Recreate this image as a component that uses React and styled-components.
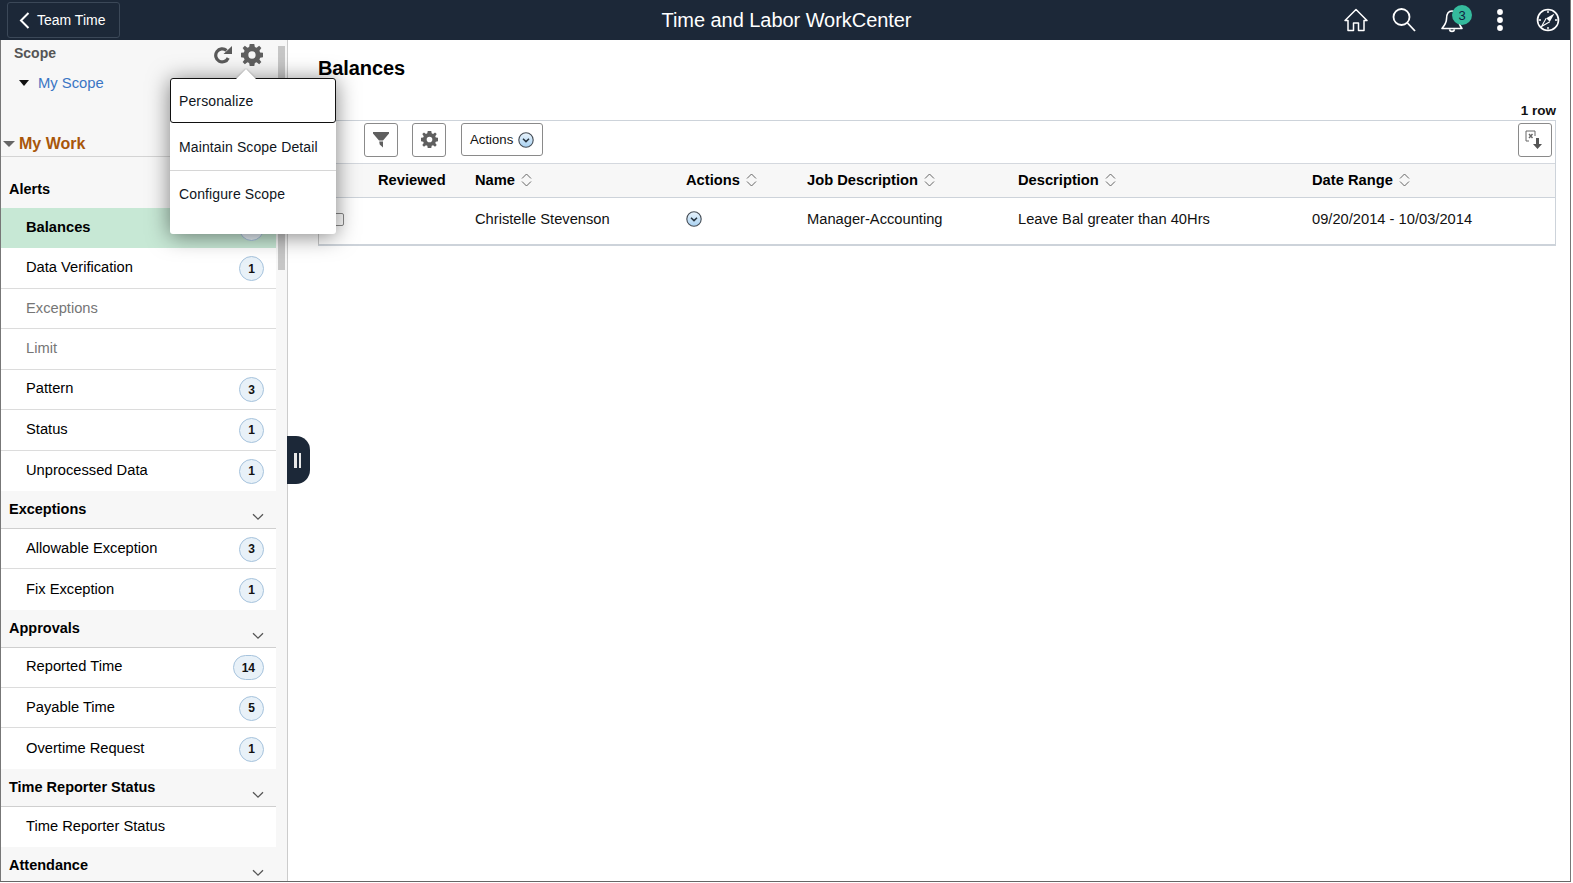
import React from "react";
import styled, { createGlobalStyle } from "styled-components";

const Global = createGlobalStyle`
  html, body { margin: 0; padding: 0; background: #fff; overflow: hidden; }
  body { font-family: "Liberation Sans", Arial, sans-serif; font-size: 14px; color: #000; }
`;

const Frame = styled.div`
  width: 1571px; height: 882px; box-sizing: border-box; position: relative; overflow: hidden;
  display: flex; flex-direction: column; background: #fff;
  border-bottom: 1px solid #666; border-right: 1px solid #777;
`;
const Banner = styled.header`
  height: 40px; flex: none; background: #1c2838; display: grid; grid-template-columns: 1fr auto 1fr; align-items: center;
  color: #fff; padding-left: 7px;
`;
const BackButton = styled.button`
  height: 36px; width: 113px; box-sizing: border-box; background: transparent; color: #fff;
  border: 1px solid #3b4858; border-radius: 3px; display: flex; align-items: center; gap: 7px;
  padding: 0 0 0 11px; font: 14px "Liberation Sans", Arial, sans-serif;
`;
const BannerTitle = styled.div`
  text-align: center; font-size: 20px; letter-spacing: -0.05px; padding-right: 4px;
`;
const IconSet = styled.div`
  display: flex; align-items: center; justify-content: flex-end; margin-right: -2px;
`;
const IconSlot = styled.span`
  width: 48px; height: 40px; display: flex; align-items: center; justify-content: center; position: relative;
`;
const Notice = styled.span`
  position: absolute; left: 24px; top: 5px; width: 20px; height: 20px; border-radius: 50%;
  background: #35bb9d; color: #10233f; font-size: 13px; display: flex; align-items: center; justify-content: center;
`;
const Body = styled.div`
  flex: 1; display: flex; min-height: 0;
`;
const Sidebar = styled.aside`
  width: 288px; flex: none; box-sizing: border-box; display: flex; background: #f7f7f7;
  border-left: 1px solid #777; border-right: 1px solid #ccc; overflow: hidden;
`;
const Nav = styled.nav`
  width: 275px; flex: none; display: flex; flex-direction: column;
`;
const Gutter = styled.div`
  flex: 1; padding: 6px 2px 0 2px;
`;
const Thumb = styled.div`
  width: 7px; height: 224px; background: #c6c6c6;
`;
const ScopeHead = styled.div`
  height: 26px; flex: none; display: flex; align-items: center; justify-content: space-between; padding: 0 13px 0 13px;
  font-weight: bold; color: #555;
`;
const ScopeTools = styled.span`
  display: flex; align-items: center; gap: 9px; color: #5a5a5a; margin-top: 3px;
`;
const ScopeLink = styled.div`
  height: 34px; flex: none; display: flex; align-items: center; gap: 9px; padding-left: 18px; color: #3a75c4; font-size: 14.8px;
`;
const TriDown = styled.span`
  width: 0; height: 0; border-left: ${p => p.$w}px solid transparent; border-right: ${p => p.$w}px solid transparent;
  border-top: 6px solid ${p => p.$c};
`;
const WorkHead = styled.div`
  margin-top: 27px; height: 30px; flex: none; box-sizing: border-box; display: flex; align-items: center; gap: 4px; padding: 9px 0 4px 2px;
  font-size: 16px; font-weight: bold; color: #a8560a; border-bottom: 1px solid #d4d4d4;
`;
const GroupHead = styled.div`
  height: ${p => p.$h || 37.8}px; box-sizing: border-box; position: relative; flex: none;
  padding: ${p => p.$t || 9}px 0 0 ${p => p.$l || 8}px; font-size: 14.5px; font-weight: bold; color: #000;
  border-bottom: ${p => (p.$plain ? "0" : "1px solid #cfcfcf")}; line-height: 18px;
`;
const Chevron = styled.svg`
  position: absolute; right: 12px; top: 22px;
`;
const Row = styled.div`
  height: 40.45px; flex: none; box-sizing: border-box; display: flex; align-items: center; justify-content: space-between;
  padding: 0 12px 0 25px; background: ${p => (p.$active ? "#c7e8d5" : "#fff")};
  border-bottom: ${p => (p.$last ? "0" : "1px solid #dcdcdc")};
  color: ${p => (p.$muted ? "#767676" : "#000")}; font-weight: ${p => (p.$active ? "bold" : "normal")};
  font-size: 14.7px;
`;
const RowLabel = styled.span`
  margin-top: -2px;
`;
const Badge = styled.span`
  min-width: 25px; height: 25px; box-sizing: border-box; padding: 0 8px; border-radius: 13px; border: 1px solid #a6c3dd;
  background: #e8f1f8; font-size: 12px; font-weight: bold; display: flex; align-items: center; justify-content: center;
  color: #111; margin-top: 1px;
`;
const Main = styled.main`
  flex: 1; min-width: 0; padding: 16px 14px 0 30px; display: flex; flex-direction: column;
`;
const Title = styled.h1`
  margin: 0; font-size: 20px; line-height: 24px; font-weight: bold; color: #000; letter-spacing: -0.1px;
`;
const RowCount = styled.div`
  margin-top: 22px; height: 18px; text-align: right; font-weight: bold; font-size: 13.5px; line-height: 18px; color: #111;
`;
const GridBox = styled.section`
  border: 1px solid #cdd3da; border-bottom-width: 2px; border-top-width: 1px; border-left-color: #c9c9c9;
`;
const Toolbar = styled.div`
  height: 43px; box-sizing: border-box; display: flex; align-items: center; gap: 14px; padding: 0 3px 5px 45px;
  border-bottom: 1px solid #d4d8de;
`;
const ToolButton = styled.button`
  width: 34px; height: 34px; box-sizing: border-box; background: #fff; border: 1px solid #8a8a8a; border-radius: 3px;
  display: flex; align-items: center; justify-content: center; padding: 0; color: #666;
`;
const ActionsButton = styled.button`
  height: 33px; width: 82px; box-sizing: border-box; background: #fff; border: 1px solid #8a8a8a; border-radius: 3px; margin-left: 1px;
  display: flex; align-items: center; gap: 5px; padding: 0 0 0 8px; font: 13.2px "Liberation Sans", Arial, sans-serif; color: #111;
`;
const Spacer = styled.span`flex: 1;`;
const Cols = styled.div`
  display: grid; grid-template-columns: 59px 97px 211px 121px 211px 294px 1fr; align-items: center;
`;
const HeadRow = styled(Cols)`
  height: 34px; box-sizing: border-box; background: #f7f7f7; border-bottom: 1px solid #cdd3da; padding-bottom: 1px;
`;
const HeadCell = styled.span`
  font-weight: bold; font-size: 14.7px; display: flex; align-items: center; gap: 6px;
  grid-column: ${p => p.$col};
`;
const BodyRow = styled(Cols)`
  height: 46px; font-size: 14.7px; color: #111; padding-bottom: 4px; box-sizing: border-box;
`;
const Check = styled.span`
  display: block; width: 13px; height: 13px; box-sizing: border-box; border: 1px solid #888; border-radius: 2px; margin-left: 12px;
`;
const Handle = styled.div`
  position: absolute; left: 287px; top: 436px; width: 23px; height: 48px; background: #1c2838;
  border-radius: 0 14px 14px 0; display: flex; align-items: center; justify-content: center; gap: 2px; padding-right: 2px; box-sizing: border-box;
`;
const HandleBar = styled.span`
  width: 2.5px; height: 15px; background: #e8e8e8;
`;
const Menu = styled.div`
  position: absolute; left: 170px; top: 78px; width: 166px; height: 156px; background: #fff; border-radius: 3px;
  box-shadow: 0 2px 22px rgba(0,0,0,.5); display: flex; flex-direction: column;
`;
const MenuArrow = styled.span`
  position: absolute; left: 66px; top: -10px; width: 20px; height: 11px; overflow: hidden;
  &::before { content: ""; display: block; width: 14px; height: 14px; background: #fff; transform: translate(3px, 4px) rotate(45deg); box-shadow: 0 0 2px #888; }
`;
const MenuItem = styled.div`
  height: ${p => p.$h}px; flex: none; box-sizing: border-box; padding: ${p => p.$t}px 0 0 9px; font-size: 14px; line-height: 18px; color: #10151c;
  letter-spacing: .12px;
  border: ${p => (p.$focus ? "1px solid #111" : "0")}; border-radius: ${p => (p.$focus ? "3px" : "0")};
  ${p => (p.$focus ? "padding-left: 8px;" : "")}
  border-bottom: ${p => (p.$focus ? "1px solid #111" : p.$line ? "1px solid #d6d6d6" : "0")};
`;

const Diamond = () => (
  <svg width="11" height="14" viewBox="0 0 11 14" fill="none" stroke="#666" strokeWidth="1">
    <path d="M1 5.500 5.500 1 10 5.500M1 8.500 5.500 13 10 8.500" />
  </svg>
);
const Cog = ({ size, color = "#5f5f5f" }) => (
  <svg width={size} height={size} viewBox="0 0 24 24">
    <path fill={color} fillRule="evenodd" d="M9.500 0h5l.6 3.300 1.900.8L19.800 2l2.400 2.400-2.100 2.900.8 1.900 3.100.3v5l-3.100.6-.8 1.900 2.100 2.700-2.400 2.400-2.800-2.100-1.900.8-.6 3.100h-5l-.6-3.100-1.900-.8-2.800 2.100-2.400-2.400 2.100-2.700-.8-1.900L0 14.500v-5l3.100-.3.800-1.900L1.800 4.400 4.200 2 7 4.100l1.900-.8L9.500 0Zm2.500 8a4 4 0 1 0 0 8 4 4 0 0 0 0-8Z" />
  </svg>
);
const RoundDown = ({ size = 16 }) => (
  <svg width={size} height={size} viewBox="0 0 16 16">
    <defs>
      <linearGradient id="rd" x1="0" y1="0" x2="0" y2="1">
        <stop offset="0" stopColor="#e9f3fb" />
        <stop offset="1" stopColor="#a9d2f2" />
      </linearGradient>
    </defs>
    <circle cx="8" cy="8" r="7.200" fill="url(#rd)" stroke="#444c55" strokeWidth="1.100" />
    <path d="M5 6.800 8 9.600 11 6.800" fill="none" stroke="#27333f" strokeWidth="1.500" />
  </svg>
);
const GroupChevron = () => (
  <Chevron width="12" height="8" viewBox="0 0 12 8" fill="none" stroke="#555" strokeWidth="1.300">
    <path d="M1 1.200 6 6.200 11 1.200" />
  </Chevron>
);

const alerts = [
  { t: "Data Verification", n: 1 },
  { t: "Exceptions", muted: true },
  { t: "Limit", muted: true },
  { t: "Pattern", n: 3 },
  { t: "Status", n: 1 },
  { t: "Unprocessed Data", n: 1, last: true },
];
const groups = [
  { name: "Exceptions", items: [{ t: "Allowable Exception", n: 3 }, { t: "Fix Exception", n: 1, last: true }] },
  { name: "Approvals", items: [{ t: "Reported Time", n: 14 }, { t: "Payable Time", n: 5 }, { t: "Overtime Request", n: 1, last: true }] },
  { name: "Time Reporter Status", items: [{ t: "Time Reporter Status", last: true }] },
];
const NavRow = ({ t, n, muted, last, active }) => (
  <Row $muted={muted} $last={last} $active={active}>
    <RowLabel>{t}</RowLabel>
    {n != null && <Badge>{n}</Badge>}
  </Row>
);

export default function App() {
  return (
    <Frame>
      <Global />
      <Banner>
        <BackButton>
          <svg width="11" height="17" viewBox="0 0 11 17" fill="none" stroke="#fff" strokeWidth="2"><path d="M9.500 1 2 8.500 9.500 16" /></svg>
          Team Time
        </BackButton>
        <BannerTitle>Time and Labor WorkCenter</BannerTitle>
        <IconSet>
          <IconSlot>
            <svg width="24" height="24" viewBox="0 0 24 24" fill="none" stroke="#fff" strokeWidth="1.500" strokeLinejoin="round"><path d="M12 1.500 23 12.500h-3V22.500h-5.500V15h-5V22.500H4V12.500H1Z" /></svg>
          </IconSlot>
          <IconSlot>
            <svg width="24" height="24" viewBox="0 0 24 24" fill="none" stroke="#fff" strokeWidth="1.800"><circle cx="9.500" cy="9" r="8" /><path d="M15.500 15 23 23" /></svg>
          </IconSlot>
          <IconSlot>
            <svg width="22" height="25" viewBox="0 0 22 25" fill="none" stroke="#fff" strokeWidth="1.600" strokeLinejoin="round"><path d="M11 3C6.500 3 5.500 7 5.500 11c0 4-2.500 7-4.500 9.500h20c-2-2.500-3.500-5.500-3.500-9.500 0-4-2-8-6.500-8ZM8.500 21.500c.5 2.500 4.500 2.500 5 0" /></svg>
            <Notice>3</Notice>
          </IconSlot>
          <IconSlot>
            <svg width="6" height="22" viewBox="0 0 6 22" fill="#fff"><circle cx="3" cy="3" r="2.900" /><circle cx="3" cy="11" r="2.900" /><circle cx="3" cy="19" r="2.900" /></svg>
          </IconSlot>
          <IconSlot>
            <svg width="24" height="24" viewBox="0 0 24 24" fill="none" stroke="#fff" strokeWidth="1.600"><circle cx="12" cy="12" r="10.500" /><path strokeWidth="1.400" d="M12 2.500V5M12 19v2.500M2.500 12H5M19 12h2.500" /><path fill="#fff" stroke="none" d="M18.500 5.500 13.800 13.800 10.200 10.200Z" /><path strokeWidth="1.100" d="M10.200 10.200 5.500 18.500 13.800 13.800" /></svg>
          </IconSlot>
        </IconSet>
      </Banner>
      <Body>
        <Sidebar>
          <Nav>
            <ScopeHead>
              Scope
              <ScopeTools>
                <svg width="18" height="18" viewBox="0 0 18 18" fill="none"><path d="M14.200 12A6.500 6.500 0 1 1 12.500 4.500" stroke="#5a5a5a" strokeWidth="3.200" /><path fill="#5a5a5a" d="M9.500 8H18V0Z" /></svg>
                <Cog size={22} />
              </ScopeTools>
            </ScopeHead>
            <ScopeLink><TriDown $c="#111" $w={5} />My Scope</ScopeLink>
            <WorkHead><TriDown $c="#666" $w={6} />My Work</WorkHead>
            <GroupHead $h={51} $t={23} $plain>Alerts</GroupHead>
            <NavRow t="Balances" n="" active last />
            {alerts.map(a => <NavRow key={a.t} {...a} />)}
            {groups.map(g => (
              <React.Fragment key={g.name}>
                <GroupHead>{g.name}<GroupChevron /></GroupHead>
                {g.items.map(i => <NavRow key={i.t} {...i} />)}
              </React.Fragment>
            ))}
            <GroupHead $plain>Attendance<GroupChevron /></GroupHead>
          </Nav>
          <Gutter><Thumb /></Gutter>
        </Sidebar>
        <Main>
          <Title>Balances</Title>
          <RowCount>1 row</RowCount>
          <GridBox>
            <Toolbar>
              <ToolButton>
                <svg width="16" height="16" viewBox="0 0 16 16" fill="#5f5f5f"><path d="M0 0h16v1.500L10 8.500H6L0 1.500ZM6.200 9.500H10V15.500L6.700 12.500Z" /></svg>
              </ToolButton>
              <ToolButton><Cog size={17} /></ToolButton>
              <ActionsButton>Actions <RoundDown /></ActionsButton>
              <Spacer />
              <ToolButton>
                <svg width="20" height="20" viewBox="0 0 20 20" fill="none" stroke="#666" strokeWidth="1"><path d="M10 1H1v10h3" /><path d="M10 1v5" /><path strokeWidth="1.400" d="m4 4 3.500 4M7.500 4 4 8" /><path fill="#555" stroke="none" d="M11 8h3v6h3l-4.500 5L8 14h3Z" /></svg>
              </ToolButton>
            </Toolbar>
            <HeadRow>
              <HeadCell $col={2}>Reviewed</HeadCell>
              <HeadCell $col={3}>Name <Diamond /></HeadCell>
              <HeadCell $col={4}>Actions <Diamond /></HeadCell>
              <HeadCell $col={5}>Job Description <Diamond /></HeadCell>
              <HeadCell $col={6}>Description <Diamond /></HeadCell>
              <HeadCell $col={7}>Date Range <Diamond /></HeadCell>
            </HeadRow>
            <BodyRow>
              <Check />
              <span />
              <span>Christelle Stevenson</span>
              <RoundDown />
              <span>Manager-Accounting</span>
              <span>Leave Bal greater than 40Hrs</span>
              <span>09/20/2014 - 10/03/2014</span>
            </BodyRow>
          </GridBox>
        </Main>
      </Body>
      <Handle><HandleBar /><HandleBar /></Handle>
      <Menu>
        <MenuArrow />
        <MenuItem $focus $h={45} $t={13}>Personalize</MenuItem>
        <MenuItem $line $h={48} $t={15}>Maintain Scope Detail</MenuItem>
        <MenuItem $h={63} $t={14}>Configure Scope</MenuItem>
      </Menu>
    </Frame>
  );
}
